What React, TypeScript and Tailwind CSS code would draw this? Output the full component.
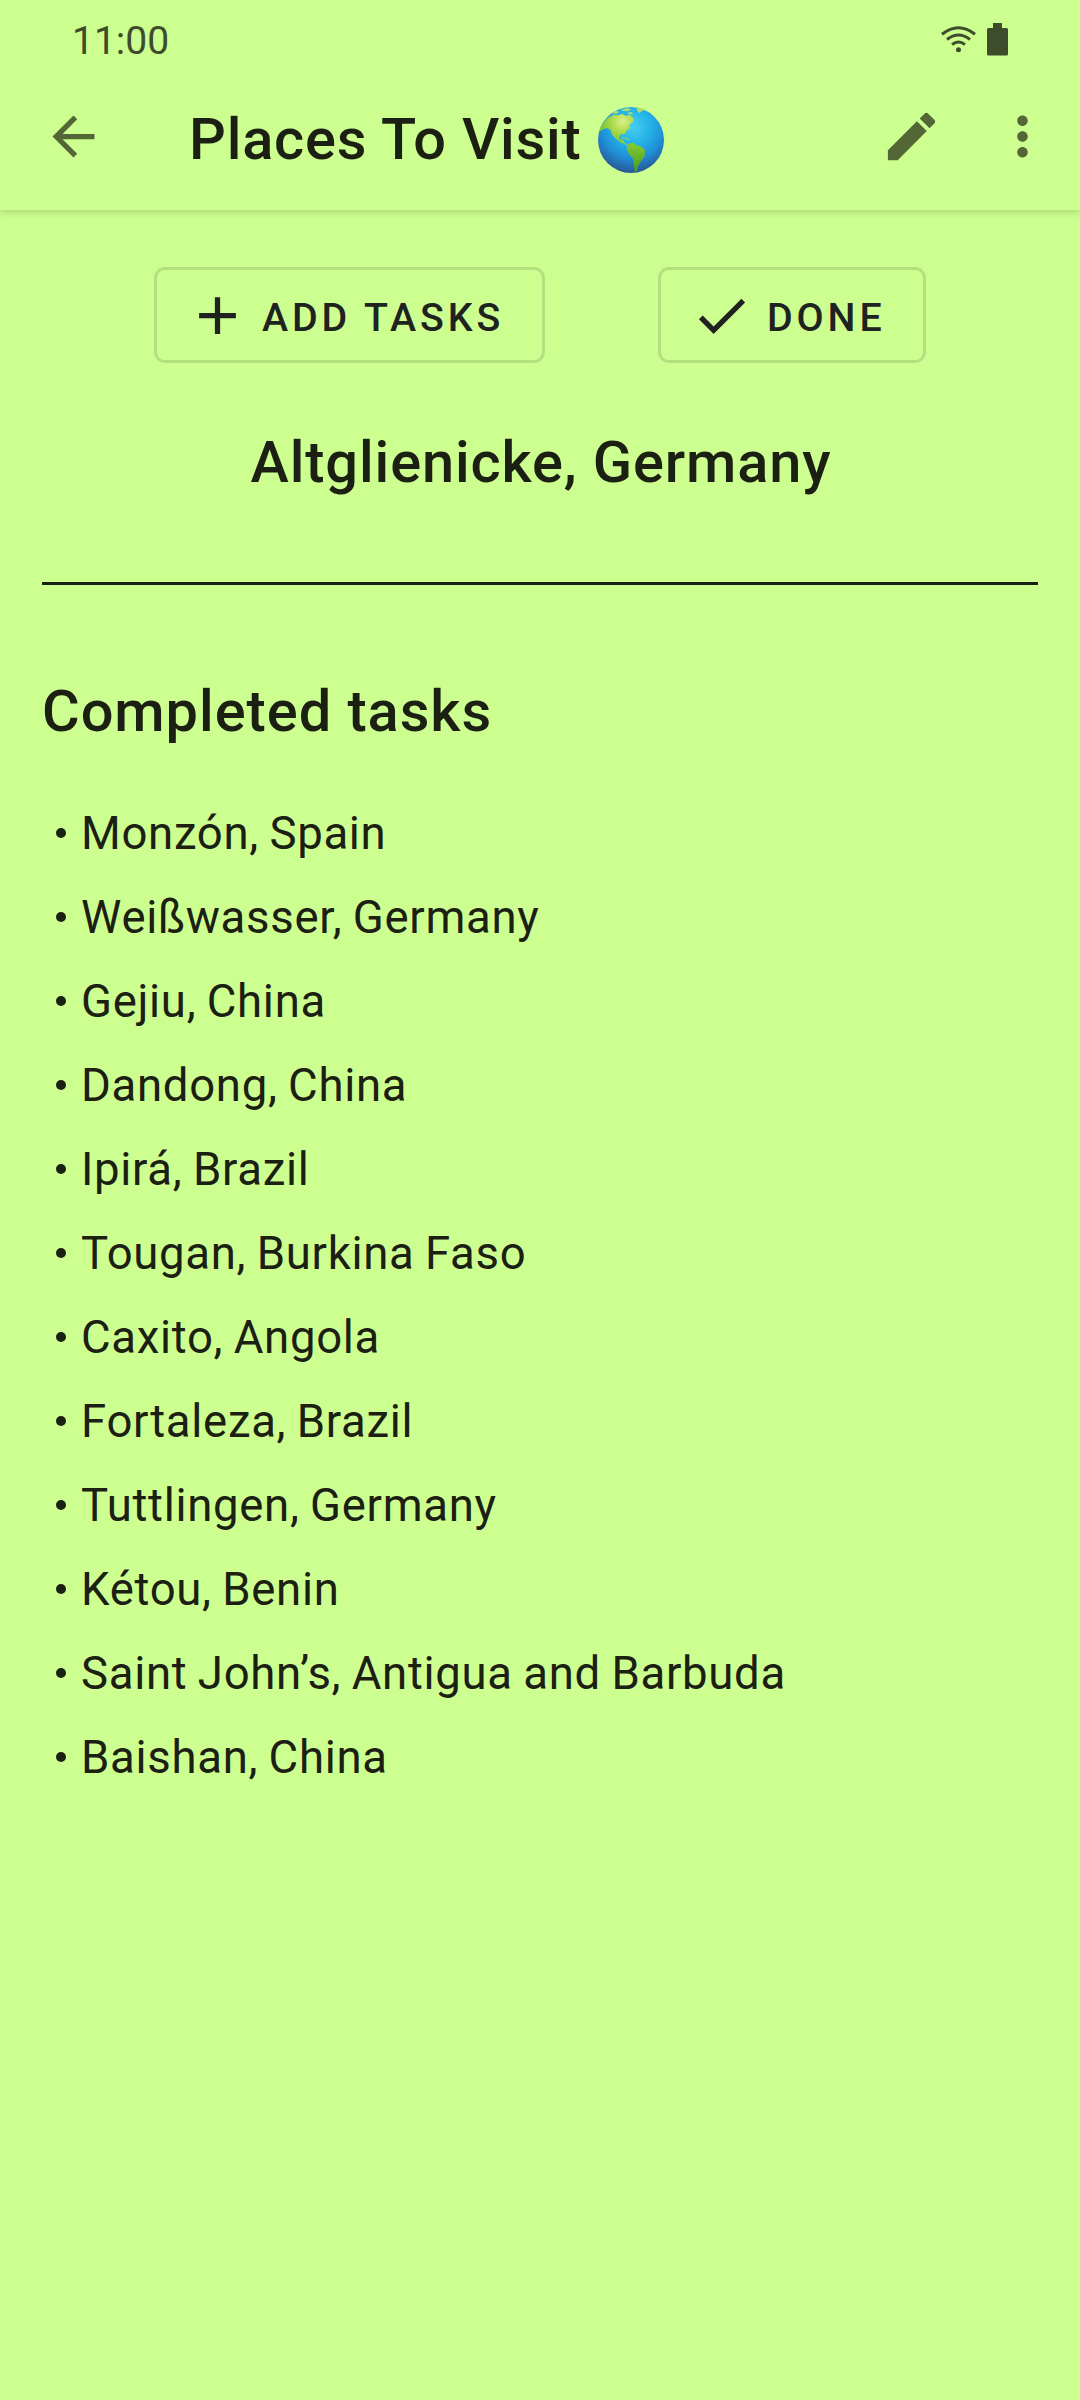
const tasks = [
  "Monzón, Spain",
  "Weißwasser, Germany",
  "Gejiu, China",
  "Dandong, China",
  "Ipirá, Brazil",
  "Tougan, Burkina Faso",
  "Caxito, Angola",
  "Fortaleza, Brazil",
  "Tuttlingen, Germany",
  "Kétou, Benin",
  "Saint John’s, Antigua and Barbuda",
  "Baishan, China",
];

function Icon({ d, className = "" }: { d: string; className?: string }) {
  return (
    <svg viewBox="0 0 24 24" fill="currentColor" className={"size-[63px] shrink-0 " + className}>
      <path d={d} />
    </svg>
  );
}

function Globe() {
  return (
    <svg viewBox="711 81 198 198" className="mt-[7px] ml-[16px] size-[66px] shrink-0">
      <defs>
        <radialGradient id="sea" gradientUnits="userSpaceOnUse" cx="815" cy="140" r="145">
          <stop offset="0" stopColor="#48cdee" />
          <stop offset="0.35" stopColor="#25b4e8" />
          <stop offset="0.65" stopColor="#1f8fd6" />
          <stop offset="1" stopColor="#2a4f8c" />
        </radialGradient>
        <linearGradient id="south" x1="0" y1="0" x2="0" y2="1">
          <stop offset="0" stopColor="#84cc30" />
          <stop offset="1" stopColor="#4a9a26" />
        </linearGradient>
        <radialGradient id="north" gradientUnits="userSpaceOnUse" cx="785" cy="124" r="60">
          <stop offset="0" stopColor="#dcee8c" />
          <stop offset="0.5" stopColor="#b0dc4e" />
          <stop offset="1" stopColor="#84c832" />
        </radialGradient>
      </defs>
      <circle cx="810" cy="180" r="99" fill="url(#sea)" />
      <path fill="url(#north)" d="M714 156C718 138 732 120 746 110L758 104 772 106 784 101 794 108 806 104 818 114 819 124 810 130 804 138 808 145 798 150 791 163 782 162 774 168 776 178 786 180 792 192 780 188 766 178 754 166 748 150 738 144 726 148Z" />
      <path fill="#a9dd6a" d="M752 101 764 93 775 95 768 101ZM778 91 796 85 812 87 800 94 790 93ZM798 98 812 96 816 103 806 103ZM826 82 840 84 854 90 842 93 836 100 829 93Z" />
      <path fill="url(#south)" d="M798 198 806 190 818 188 826 196 838 198 852 210 850 230 838 246 830 260 829 274 821 272 819 258 816 236 804 222 797 208Z" />
      <path fill="none" stroke="#9bd45a" strokeWidth="3" d="M783 173 794 175 806 180M784 182 790 190 800 196" />
    </svg>
  );
}

export default function App() {
  return (
    <div className="flex h-[2400px] w-[1080px] flex-col overflow-hidden bg-[#ccff90] font-['Roboto',sans-serif] text-[#1c2012]">
      <header className="flex h-[210px] flex-col shadow-[0_1px_7px_1px_rgba(40,60,10,0.22)]">
        <div className="flex h-[63px] items-center justify-between px-[72px] pt-[15px] text-[#3d4c2b]">
          <span className="mt-[3px] text-[39px] leading-[48px]">11:00</span>
          <div className="flex items-center gap-[11px]">
            <svg viewBox="0 0 35 27" className="h-[27px] w-[35px]" fill="none" stroke="currentColor" strokeWidth="3">
              <path d="M1 8.3Q17.5 -4.7 34 8.3M6 13.5Q17.5 4.4 29 13.5M11 18.6Q17.5 13.3 24 18.6" />
              <circle cx="17.5" cy="23.8" r="2.5" fill="currentColor" stroke="none" />
            </svg>
            <svg viewBox="0 0 21 33" className="h-[33px] w-[21px]" fill="currentColor">
              <path d="M6 0H15V5H19.5Q21 5 21 6.5V31Q21 32.5 19.5 32.5H1.5Q0 32.5 0 31V6.5Q0 5 1.5 5H6Z" />
            </svg>
          </div>
        </div>
        <div className="flex h-[147px] items-center pr-[26px] pl-[42px]">
          <Icon className="text-[#526636]" d="M20 11H7.83l5.59-5.59L12 4l-8 8 8 8 1.41-1.41L7.83 13H20v-2z" />
          <h1 className="mt-[5px] ml-[84px] text-[57.75px] leading-[68px] font-medium tracking-[0.8px]">Places To Visit</h1>
          <Globe />
          <Icon className="ml-auto text-[#526636]" d="M3 17.25V21h3.75L17.81 9.94l-3.75-3.75L3 17.25zM20.71 7.04c.39-.39.39-1.02 0-1.41l-2.34-2.34c-.39-.39-1.02-.39-1.41 0l-1.83 1.83 3.75 3.75 1.83-1.83z" />
          <Icon className="ml-[48px] text-[#526636]" d="M12 8c1.1 0 2-.9 2-2s-.9-2-2-2-2 .9-2 2 .9 2 2 2zm0 2c-1.1 0-2 .9-2 2s.9 2 2 2 2-.9 2-2-.9-2-2-2zm0 6c-1.1 0-2 .9-2 2s.9 2 2 2 2-.9 2-2-.9-2-2-2z" />
        </div>
      </header>
      <main className="flex flex-col px-[42px]">
        <div className="mt-[57px] flex gap-[113px] pl-[112px] text-[39.375px] leading-[46px] font-medium tracking-[3.9px] text-[#202220]">
          <button className="flex h-[96px] w-[391px] items-center gap-[13px] rounded-[11px] border-[3px] border-[#b2e07f] pl-[29px]">
            <Icon d="M19 13h-6v6h-2v-6H5v-2h6V5h2v6h6v2z" />
            <span className="mt-[5px] whitespace-nowrap">ADD TASKS</span>
          </button>
          <button className="flex h-[96px] w-[268px] items-center gap-[14px] rounded-[11px] border-[3px] border-[#b2e07f] pl-[29px]">
            <Icon d="M9 16.17L4.83 12l-1.42 1.41L9 19 21 7l-1.41-1.41z" />
            <span className="mt-[5px]">DONE</span>
          </button>
        </div>
        <h2 className="mt-[65px] pl-[2px] text-center text-[57.75px] leading-[68px] font-medium tracking-[0.87px]">Altglienicke, Germany</h2>
        <hr className="mt-[86px] border-t-[3px] border-[#1c2012]" />
        <h2 className="mt-[92px] text-[57.75px] leading-[68px] font-medium tracking-[0.95px]">Completed tasks</h2>
        <ul className="mt-[47px] text-[45.5px] leading-[84px] tracking-[0.7px] [word-spacing:-1.5px]">
          {tasks.map((task) => (
            <li key={task} className="flex items-center">
              <span className="-mt-[3px] mr-[15px] ml-[14px] size-[10px] rounded-full bg-[#1c2012]" />
              <span>{task}</span>
            </li>
          ))}
        </ul>
      </main>
    </div>
  );
}
